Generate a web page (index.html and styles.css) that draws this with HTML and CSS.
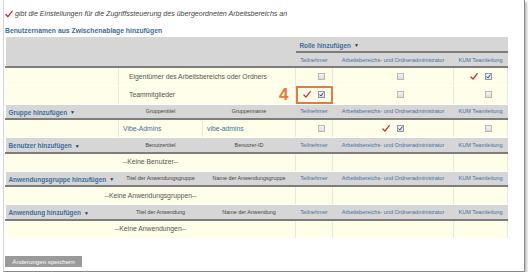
FILE: index.html
```html
<!DOCTYPE html>
<html lang="de">
<head>
<meta charset="utf-8">
<title>Zugriffssteuerung</title>
<link rel="stylesheet" href="styles.css">
</head>
<body>
<div class="frame">
  <p class="note"><svg class="rcheck" viewBox="0 0 9 8" width="8" height="8"><path d="M1 4.6 L3.3 7 L8.2 0.8" /></svg><span>gibt die Einstellungen für die Zugriffssteuerung des übergeordneten Arbeitsbereichs an</span></p>
  <h2 class="title">Benutzernamen aus Zwischenablage hinzufügen</h2>
  <table class="acl">
    <colgroup>
      <col class="c1"><col class="c2"><col class="c3"><col class="c4"><col class="c5"><col class="c6">
    </colgroup>
    <tr class="hd hd-a">
      <th colspan="3" rowspan="2" class="blank"></th>
      <th colspan="3" class="lefthd"><span class="hlink">Rolle hinzufügen</span><span class="arrow">▼</span></th>
    </tr>
    <tr class="hd">
      <th class="role">Teilnehmer</th>
      <th class="role">Arbeitsbereichs- und Ordneradministrator</th>
      <th class="role">KUM Teamleitung</th>
    </tr>
    <tr class="row">
      <td></td>
      <td colspan="2" class="txt">Eigentümer des Arbeitsbereichs oder Ordners</td>
      <td class="cb"><span class="rc off"></span><span class="box"></span></td>
      <td class="cb"><span class="rc off"></span><span class="box"></span></td>
      <td class="cb"><span class="rc"></span><span class="box on"></span></td>
    </tr>
    <tr class="row">
      <td></td>
      <td colspan="2" class="txt">Teammitglieder</td>
      <td class="cb marked"><span class="num">4</span><span class="rc"></span><span class="box on"></span></td>
      <td class="cb"><span class="rc off"></span><span class="box"></span></td>
      <td class="cb"><span class="rc off"></span><span class="box"></span></td>
    </tr>
    <tr class="hd">
      <th class="lefthd"><span class="hlink">Gruppe hinzufügen</span><span class="arrow">▼</span></th>
      <th class="lbl">Gruppentitel</th>
      <th class="lbl">Gruppenname</th>
      <th class="role">Teilnehmer</th>
      <th class="role">Arbeitsbereichs- und Ordneradministrator</th>
      <th class="role">KUM Teamleitung</th>
    </tr>
    <tr class="row">
      <td></td>
      <td class="link">Vibe-Admins</td>
      <td class="link">vibe-admins</td>
      <td class="cb"><span class="rc off"></span><span class="box"></span></td>
      <td class="cb"><span class="rc"></span><span class="box on"></span></td>
      <td class="cb"><span class="rc off"></span><span class="box"></span></td>
    </tr>
    <tr class="hd">
      <th class="lefthd"><span class="hlink">Benutzer hinzufügen</span><span class="arrow">▼</span></th>
      <th class="lbl">Benutzertitel</th>
      <th class="lbl">Benutzer-ID</th>
      <th class="role">Teilnehmer</th>
      <th class="role">Arbeitsbereichs- und Ordneradministrator</th>
      <th class="role">KUM Teamleitung</th>
    </tr>
    <tr class="row">
      <td colspan="3" class="none">--Keine Benutzer--</td>
      <td></td><td></td><td></td>
    </tr>
    <tr class="hd">
      <th class="lefthd"><span class="hlink">Anwendungsgruppe hinzufügen</span><span class="arrow">▼</span></th>
      <th class="lbl">Titel der Anwendungsgruppe</th>
      <th class="lbl">Name der Anwendungsgruppe</th>
      <th class="role">Teilnehmer</th>
      <th class="role">Arbeitsbereichs- und Ordneradministrator</th>
      <th class="role">KUM Teamleitung</th>
    </tr>
    <tr class="row">
      <td colspan="3" class="none">--Keine Anwendungsgruppen--</td>
      <td></td><td></td><td></td>
    </tr>
    <tr class="hd">
      <th class="lefthd"><span class="hlink">Anwendung hinzufügen</span><span class="arrow">▼</span></th>
      <th class="lbl">Titel der Anwendung</th>
      <th class="lbl">Name der Anwendung</th>
      <th class="role">Teilnehmer</th>
      <th class="role">Arbeitsbereichs- und Ordneradministrator</th>
      <th class="role">KUM Teamleitung</th>
    </tr>
    <tr class="row">
      <td colspan="3" class="none">--Keine Anwendungen--</td>
      <td></td><td></td><td></td>
    </tr>
  </table>
  <button class="save" type="button">Änderungen speichern</button>
</div>
</body>
</html>
```
FILE: styles.css
```css
* { box-sizing: border-box; }
html, body { margin: 0; padding: 0; background: #fff; }
body { font-family: "Liberation Sans", Arial, sans-serif; color: #333; }

.frame {
  margin-left: 3px;
  width: 522px;
  height: 272px;
  border-left: 1px solid #d6d6d6;
  border-right: 1px solid #8a8a8a;
  border-bottom: 1px solid #8a8a8a;
  box-shadow: 2px 2px 2px rgba(0,0,0,0.25);
  padding: 9px 0 0 1px;
}

.note {
  margin: 0;
  height: 9px;
  display: flex;
  align-items: center;
  gap: 2px;
  font-size: 7.1px;
  font-style: italic;
  color: #444;
}
.rcheck { flex: none; }
.rcheck path { fill: none; stroke: #d9262b; stroke-width: 1.5; stroke-linecap: round; stroke-linejoin: round; }

.title {
  margin: 9px 0 0 0;
  height: 10px;
  font-size: 6.8px;
  line-height: 8px;
  font-weight: bold;
  color: #3b6e9e;
}

.acl {
  border-collapse: collapse;
  table-layout: fixed;
  width: 502px;
  margin-top: 0;
}
.c1 { width: 113px; }
.c2 { width: 84px; }
.c3 { width: 93px; }
.c4 { width: 37px; }
.c5 { width: 121px; }
.c6 { width: 54px; }

.acl th, .acl td { padding: 0; white-space: nowrap; overflow: visible; line-height: 8px; }

.hd th {
  background: #d6d6d6;
  height: 15px;
  border-bottom: 2px solid #7d7d7d;
  font-weight: normal;
  vertical-align: middle;
}

.lefthd { text-align: left; padding-left: 3px !important; }
.hlink { font-size: 6.4px; font-weight: bold; color: #3b6e9e; }
.arrow { font-size: 5px; color: #333; margin-left: 3px; position: relative; top: -0.5px; }
.hd-a .lefthd { padding-left: 4px !important; }

.role { font-size: 5.6px; color: #3f70a5; text-align: center; }
.lbl { font-size: 5.4px; color: #444; text-align: center; }

.row td {
  background: #fffee8;
  height: 18.5px;
  border-left: 1px solid #fff;
  border-right: 1px solid #e8e8dc;
  border-bottom: 1px solid #fff;
  font-size: 6.8px;
  color: #555;
  vertical-align: middle;
}
.row td.txt { padding-left: 10px; }
.row td.link { color: #3f70a5; padding-left: 4px; }
.row td.none { text-align: center; color: #555; }

.cb { text-align: center; }
.rc {
  display: inline-block;
  width: 8px;
  height: 7px;
  margin-right: 7px;
  vertical-align: middle;
  background: no-repeat center/8px 7px url("data:image/svg+xml,%3Csvg xmlns='http://www.w3.org/2000/svg' viewBox='0 0 9 8'%3E%3Cpath d='M1 4.6 L3.3 7 L8.2 0.8' fill='none' stroke='%23d9262b' stroke-width='1.5' stroke-linecap='round' stroke-linejoin='round'/%3E%3C/svg%3E");
}
.rc.off { visibility: hidden; }
.box {
  display: inline-block;
  width: 7px;
  height: 7px;
  vertical-align: middle;
  border: 1px solid #b8b8b8;
  background: linear-gradient(#f6f6f6, #dcdcdc);
}
.box.on {
  border-color: #8e98aa;
  background: no-repeat center/5px 5px url("data:image/svg+xml,%3Csvg xmlns='http://www.w3.org/2000/svg' viewBox='0 0 5 5'%3E%3Cpath d='M0.6 2.6 L1.9 4 L4.4 0.7' fill='none' stroke='%231f3f86' stroke-width='1'/%3E%3C/svg%3E"), linear-gradient(#f6f6f6, #dcdcdc);
}

.marked { position: relative; outline: 2px solid #e57a3a; outline-offset: -2px; }
.num {
  position: absolute;
  left: -17px;
  top: 0;
  font-size: 17px;
  line-height: 17px;
  font-weight: bold;
  color: #e57a3a;
}

.save {
  margin: 17px 0 0 0;
  display: block;
  width: 77px;
  height: 11px;
  padding: 0;
  border: none;
  background: #9a9a9a;
  color: #fff;
  font-family: "Liberation Sans", Arial, sans-serif;
  font-size: 6.2px;
  line-height: 11px;
  text-align: center;
}
```
